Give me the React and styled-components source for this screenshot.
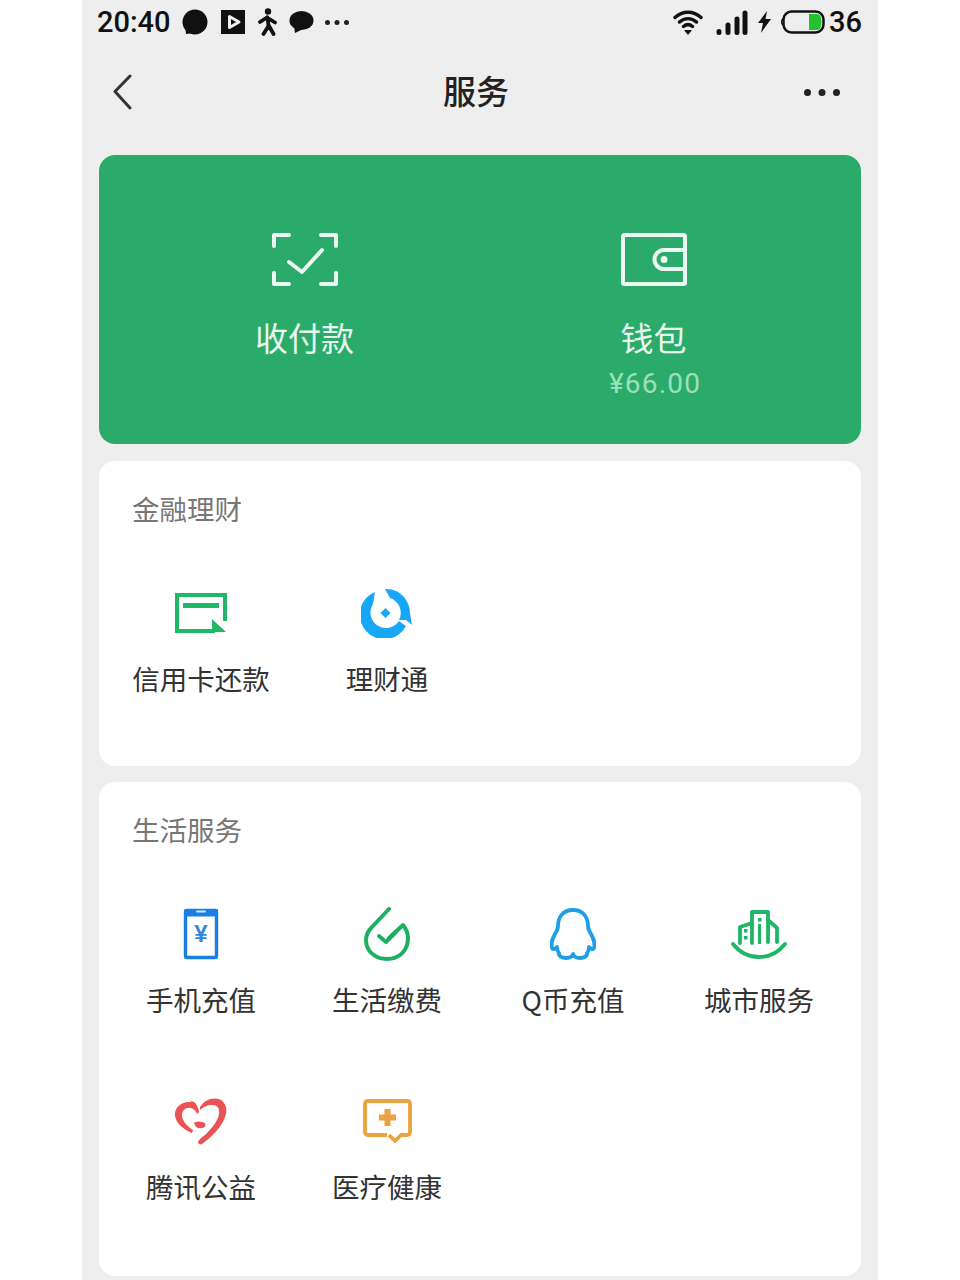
import React from "react";
import styled, {createGlobalStyle} from "styled-components";

const GlobalStyle = createGlobalStyle`
  html, body {
    margin: 0;
    padding: 0;
    background: #fff;
  }
  body {
    font-family: "Noto Sans CJK SC", Roboto, sans-serif;
  }
`;

const Phone = styled.div`
  width: 796px;
  height: 1280px;
  margin: 0 auto;
  background: #eeeeee;
  overflow: hidden;
`;

const StatusBar = styled.div`
  height: 44px;
  padding: 0 16px 0 15px;
  display: flex;
  align-items: center;
  justify-content: space-between;
  color: #111;
`;

const StatusGroup = styled.div`
  display: flex;
  align-items: center;
  gap: ${props => props.$gap || 10}px;
`;

const StatusText = styled.span`
  font-family: Roboto, sans-serif;
  font-weight: 500;
  font-size: 29px;
  line-height: 44px;
`;

const NavBar = styled.div`
  height: 96px;
  padding: 0 38px 0 30px;
  margin-bottom: 15px;
  display: grid;
  grid-template-columns: 1fr auto 1fr;
  align-items: center;
`;

const NavTitle = styled.div`
  padding-bottom: 4px;
  font-size: 33px;
  font-weight: 500;
  line-height: 46px;
  color: #222;
`;

const NavRight = styled.div`
  display: flex;
  justify-content: flex-end;
`;

const Content = styled.div`
  padding: 0 17px;
  display: flex;
  flex-direction: column;
  gap: 16px;
`;

const PayCard = styled.div`
  background: #2bab69;
  border-radius: 16px;
  margin-bottom: 1px;
  padding: 77px 0 42px 31px;
  display: grid;
  grid-template-columns: 349px 349px;
  align-items: start;
`;

const PayItem = styled.div`
  display: flex;
  flex-direction: column;
  align-items: center;
`;

const PayLabel = styled.div`
  margin-top: 27px;
  font-size: 33px;
  line-height: 46px;
  color: #e9f6ee;
`;

const PayAmount = styled.div`
  margin-top: 6px;
  padding-left: 3px;
  font-family: Roboto, sans-serif;
  font-size: 28px;
  line-height: 36px;
  letter-spacing: 1.2px;
  color: #9be0ba;
`;

const Card = styled.section`
  background: #fff;
  border-radius: 16px;
  padding: 27px 9px 68px;

  &:last-child {
    padding-bottom: 70px;
  }
`;

const CardTitle = styled.h2`
  margin: 0 0 55px 24px;
  font-size: 27.5px;
  font-weight: 400;
  line-height: 40px;
  color: #777;
`;

const ServiceGrid = styled.div`
  display: grid;
  grid-template-columns: repeat(4, 186px);
  row-gap: 72px;
`;

const Service = styled.div`
  display: flex;
  flex-direction: column;
  align-items: center;
`;

const ServiceIcon = styled.div`
  height: 60px;
  margin-bottom: 15px;
  display: flex;
  align-items: center;
  justify-content: center;
`;

const ServiceLabel = styled.div`
  font-size: 27.5px;
  line-height: 40px;
  color: #333;
  white-space: nowrap;
`;

const Bubble = () => (
  <svg width="28" height="26" viewBox="0 0 28 26">
    <circle cx="13" cy="13" r="12.500" fill="#111"/>
    <path d="M3 16l1 9 9-1z" fill="#111"/>
  </svg>
);

const PlayBox = () => (
  <svg width="24" height="24" viewBox="0 0 24 24">
    <rect width="24" height="24" fill="#111"/>
    <path d="M8.500 6.500L18 12l-9.500 5.500z" fill="none" stroke="#eee" strokeWidth="3" strokeLinejoin="round"/>
  </svg>
);

const Walker = () => (
  <svg width="22" height="28" viewBox="-2 0 22 28">
    <circle cx="10" cy="3.500" r="3.200" fill="#111"/>
    <path d="M2 14l7-4.500 8 5M9.500 9.500l1 8.500-5 8M10.500 17l5 9" fill="none" stroke="#111" strokeWidth="3.800" strokeLinecap="round" strokeLinejoin="round"/>
  </svg>
);

const Chat = () => (
  <svg width="25" height="23" viewBox="0 0 25 23">
    <ellipse cx="12.500" cy="9.500" rx="12" ry="9.500" fill="#111"/>
    <path d="M5 15l1 7 8-4z" fill="#111"/>
  </svg>
);

const Dots = ({width, r, gap, color}) => (
  <svg width={width} height={r * 2} viewBox={`0 0 ${width} ${r * 2}`}>
    {[0, 1, 2].map(i => <circle key={i} cx={r + i * gap} cy={r} r={r} fill={color}/>)}
  </svg>
);

const Wifi = () => (
  <svg width="33" height="26" viewBox="0 0 33 26">
    <path d="M2 8.500C9.500 1.500 20.500 1.500 28 8.500M6.500 13C11.500 8.500 18.500 8.500 23.500 13M10.500 17.500C13.500 15 16.500 15 19.500 17.500" fill="none" stroke="#111" strokeWidth="3.400" strokeLinecap="round"/>
    <path d="M11 21h8L15 26z" fill="#111"/>
  </svg>
);

const Signal = () => (
  <svg width="32" height="25" viewBox="0 0 32 25">
    <g fill="none" stroke="#111" strokeWidth="5" strokeLinecap="round">
      <path d="M3 21.500v1M12 15v7.500M21 9v13.500M29 3v19.500"/>
    </g>
  </svg>
);

const Bolt = () => (
  <svg width="13" height="22" viewBox="0 0 13 22">
    <path d="M9 0L0 12h5l-2 10 10-14H7.500z" fill="#111"/>
  </svg>
);

const Battery = () => (
  <svg width="44" height="24" viewBox="0 0 44 24">
    <path d="M2 8.500L0 12l2 3.500" fill="none" stroke="#111" strokeWidth="1.500"/>
    <rect x="2.500" y="1.500" width="40" height="21" rx="8" fill="none" stroke="#111" strokeWidth="2.500"/>
    <path d="M28 4h8c3 0 4.500 3.500 4.500 8s-1.500 8-4.500 8h-8z" fill="#22c32e"/>
  </svg>
);

const BackArrow = () => (
  <svg width="20" height="36" viewBox="0 0 20 36" style={{display: "block"}}>
    <path d="M18 2L3 17.500 18 34" fill="none" stroke="#333" strokeWidth="3" strokeLinecap="round" strokeLinejoin="round"/>
  </svg>
);

const ScanCheck = () => (
  <svg width="68" height="55" viewBox="0 0 68 55">
    <g fill="none" stroke="#eef8f2" strokeWidth="4" strokeLinecap="round" strokeLinejoin="round">
      <path d="M3 14V3h15M50 3h15v11M3 41v11h15M50 52h15V41"/>
      <path d="M18 30l13 10 20-22"/>
    </g>
  </svg>
);

const Wallet = () => (
  <svg width="68" height="55" viewBox="0 0 68 55">
    <g fill="none" stroke="#eef8f2" strokeWidth="4" strokeLinejoin="round">
      <rect x="3" y="3" width="62" height="49" rx="1.500"/>
      <path d="M65 18H44a9.500 9.500 0 0 0 0 19h21"/>
    </g>
    <circle cx="44" cy="27.500" r="3.500" fill="#eef8f2"/>
  </svg>
);

const CreditCard = () => (
  <svg width="52" height="40" viewBox="0 0 52 40">
    <path d="M50 28V2H2v36h38" fill="none" stroke="#20b866" strokeWidth="4"/>
    <rect x="8" y="10" width="36" height="5" fill="#20b866"/>
    <path d="M37 26l14 13H37z" fill="#20b866"/>
  </svg>
);

const Licaitong = () => (
  <svg width="52" height="50" viewBox="0 0 52 50">
    <g fill="#18a7f6">
      <path d="M14 4A24.500 24.500 0 1 0 45 38L38 33A15.500 15.500 0 1 1 12 16Z"/>
      <path d="M24 1C38 0 49 12 49 25L51 37 45 32 38 32A15.500 15.500 0 0 0 29 10Z"/>
      <path d="M24.500 20l5 5-5 5-5-5z"/>
    </g>
  </svg>
);

const PhoneBill = () => (
  <svg width="36" height="52" viewBox="0 0 36 52">
    <rect x="2.500" y="2.500" width="31" height="47" rx="1.500" fill="none" stroke="#1a7ee2" strokeWidth="3.400"/>
    <rect x="1" y="1" width="34" height="7.500" rx="2" fill="#1a7ee2"/>
    <rect x="13" y="2.500" width="10" height="2" rx="1" fill="#cfe4fa"/>
    <text x="18" y="34" textAnchor="middle" fontFamily="Liberation Sans, sans-serif" fontWeight="700" fontSize="24" fill="#3b86d6">¥</text>
  </svg>
);

const LifeBill = () => (
  <svg width="46" height="54" viewBox="0 0 46 54">
    <g fill="none" stroke="#1db063" strokeWidth="4" strokeLinecap="round" strokeLinejoin="round">
      <path d="M25 2L8 20C3 25 2 29 2 33c0 11 9 19 21 19s21-8 21-21c0-4-1-8-5-13L25 31"/>
      <path d="M15 29l7 6 10-10"/>
    </g>
  </svg>
);

const QQ = () => (
  <svg width="46" height="52" viewBox="0 0 46 52">
    <path d="M23 2c10 0 15 7 15 16 0 3 1 5 3 8 3 5 4 11 3 14-1 2-3 1-5-1 0 3-1 5-2 6 1 3-3 5-7 5-3 0-6-1-7-4-1 3-4 4-7 4-4 0-8-2-7-5-1-1-2-3-2-6-2 2-4 3-5 1-1-3 0-9 3-14 2-3 3-5 3-8C8 9 13 2 23 2z" fill="none" stroke="#1c9fe8" strokeWidth="3.800" strokeLinejoin="round"/>
  </svg>
);

const City = () => (
  <svg width="56" height="50" viewBox="0 0 56 50">
    <g fill="none" stroke="#1fb765" strokeWidth="3.800" strokeLinecap="round" strokeLinejoin="round">
      <path d="M2 35c7 9 16 13 26 13s19-4 26-13"/>
      <path d="M9 34V18l12-4v20"/>
      <path d="M21 14V3h16v30"/>
      <path d="M37 11l9 8v14"/>
    </g>
    <g fill="#1fb765">
      <rect x="13" y="20" width="3.500" height="3.500"/>
      <rect x="13" y="27" width="3.500" height="3.500"/>
      <rect x="27" y="9" width="3.500" height="3.500"/>
      <rect x="27" y="15" width="3" height="20"/>
    </g>
  </svg>
);

const Charity = () => (
  <svg width="54" height="48" viewBox="0 0 54 48">
    <g fill="#ea5356">
      <path d="M17 5C7 4 0 11 1 19c1 7 8 13 17 17l1-3c-6-4-11-9-11-15 0-5 4-8 9-7 3 1 5 3 6 6l2-2c-1-6-3-10-8-11z"/>
      <path d="M26 10c4-7 12-10 19-8 7 3 9 11 6 18-3 9-12 19-23 27-2 1-4 0-4-2 1-3 4-5 7-7 7-7 13-14 14-21 1-6-2-9-7-9-5 0-9 2-12 5z"/>
      <path d="M20 26c3-2 7-2 11 0 1 2 0 5-3 5-4 1-7-1-8-5z"/>
    </g>
  </svg>
);

const Medical = () => (
  <svg width="49" height="44" viewBox="0 0 49 44">
    <path d="M24 36H5c-2 0-3-1-3-3V5c0-2 1-3 3-3h39c2 0 3 1 3 3v28c0 2-1 3-3 3h-6l-6 6-6-6" fill="none" stroke="#eca23f" strokeWidth="3.800" strokeLinejoin="round"/>
    <path d="M24.500 10v17M16 18.500h17" fill="none" stroke="#eca23f" strokeWidth="6"/>
  </svg>
);

const finance = [
  {label: "信用卡还款", icon: <CreditCard/>},
  {label: "理财通", icon: <Licaitong/>},
];

const life = [
  {label: "手机充值", icon: <PhoneBill/>},
  {label: "生活缴费", icon: <LifeBill/>},
  {label: "Q币充值", icon: <QQ/>},
  {label: "城市服务", icon: <City/>},
  {label: "腾讯公益", icon: <Charity/>},
  {label: "医疗健康", icon: <Medical/>},
];

const ServiceCard = ({title, items}) => (
  <Card>
    <CardTitle>{title}</CardTitle>
    <ServiceGrid>
      {items.map(item => (
        <Service key={item.label}>
          <ServiceIcon>{item.icon}</ServiceIcon>
          <ServiceLabel>{item.label}</ServiceLabel>
        </Service>
      ))}
    </ServiceGrid>
  </Card>
);

const App = () => {
  return (
    <Phone>
      <GlobalStyle/>
      <StatusBar>
        <StatusGroup $gap={11}>
          <StatusText>20:40</StatusText>
          <Bubble/>
          <PlayBox/>
          <Walker/>
          <Chat/>
          <Dots width={24} r={2.5} gap={9.5} color="#222"/>
        </StatusGroup>
        <StatusGroup $gap={10}>
          <Wifi/>
          <Signal/>
          <Bolt/>
          <StatusGroup $gap={4}>
            <Battery/>
            <StatusText>36</StatusText>
          </StatusGroup>
        </StatusGroup>
      </StatusBar>
      <NavBar>
        <div><BackArrow/></div>
        <NavTitle>服务</NavTitle>
        <NavRight><Dots width={36} r={3.5} gap={14.5} color="#222"/></NavRight>
      </NavBar>
      <Content>
        <PayCard>
          <PayItem>
            <ScanCheck/>
            <PayLabel>收付款</PayLabel>
          </PayItem>
          <PayItem>
            <Wallet/>
            <PayLabel>钱包</PayLabel>
            <PayAmount>¥66.00</PayAmount>
          </PayItem>
        </PayCard>
        <ServiceCard title="金融理财" items={finance}/>
        <ServiceCard title="生活服务" items={life}/>
      </Content>
    </Phone>
  );
};

export default App;
